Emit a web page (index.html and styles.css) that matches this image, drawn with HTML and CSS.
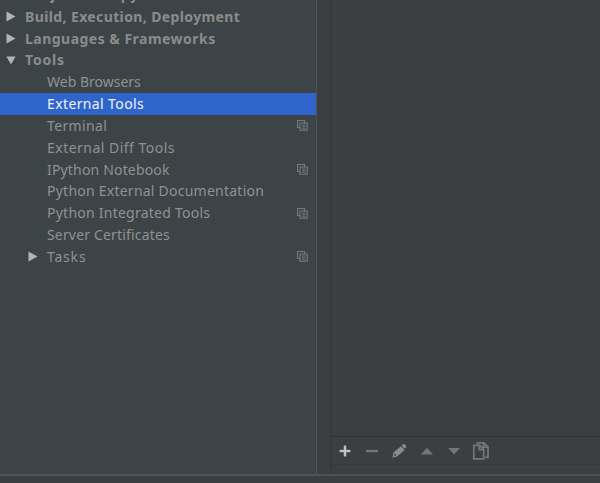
FILE: index.html
```html
<!DOCTYPE html>
<html lang="en">
<head>
<meta charset="utf-8">
<title>Preferences</title>
<link rel="stylesheet" href="styles.css">
</head>
<body>
<svg class="defs" width="0" height="0">
  <symbol id="copy" viewBox="0 0 11 11"><path d="M2.5 7.5h-2v-7h7v2M3 3h7.2v7.2H3z" fill="none" stroke="currentColor" stroke-width="1.1"/><path d="M5 5h3.5M5 6.7h3.5M5 8.4h3.5" stroke="currentColor" stroke-width=".9"/></symbol>
  <symbol id="right" viewBox="0 0 10 11"><path d="M.5.5 9.5 5.5.5 10.5z" fill="currentColor"/></symbol>
  <symbol id="down" viewBox="0 0 11 9"><path d="M.4.2h10.2L5.5 9z" fill="currentColor"/></symbol>
</svg>
<div class="window">
  <main class="content">
    <nav class="tree">
      <div class="row group"><span class="label widest">Project: scrapy</span></div>
      <div class="row group"><svg class="arrow"><use href="#right"/></svg><span class="label">Build, Execution, Deployment</span></div>
      <div class="row group"><svg class="arrow"><use href="#right"/></svg><span class="label wide">Languages &amp; Frameworks</span></div>
      <div class="row group"><svg class="arrow open"><use href="#down"/></svg><span class="label widest">Tools</span></div>
      <div class="row"><span class="label tight">Web Browsers</span></div>
      <div class="row selected"><span class="label">External Tools</span></div>
      <div class="row"><span class="label">Terminal</span><svg class="copy"><use href="#copy"/></svg></div>
      <div class="row"><span class="label wide">External Diff Tools</span></div>
      <div class="row"><span class="label snug">IPython Notebook</span><svg class="copy"><use href="#copy"/></svg></div>
      <div class="row"><span class="label medium">Python External Documentation</span></div>
      <div class="row"><span class="label medium">Python Integrated Tools</span><svg class="copy"><use href="#copy"/></svg></div>
      <div class="row"><span class="label snug">Server Certificates</span></div>
      <div class="row branch"><svg class="arrow"><use href="#right"/></svg><span class="label widest">Tasks</span><svg class="copy"><use href="#copy"/></svg></div>
    </nav>
    <section class="panel">
      <div class="list"></div>
      <div class="toolbar">
        <svg class="tool bright" viewBox="0 0 20 20"><path d="M10 4v12M4 10h12" stroke="#303234" stroke-width="4"/><path d="M10 4.5v11M4.5 10h11" stroke="currentColor" stroke-width="2.6"/></svg>
        <svg class="tool" viewBox="0 0 20 20"><path d="M4 10h12" stroke="currentColor" stroke-width="2.4"/></svg>
        <svg class="tool pencil" viewBox="0 0 20 20"><path d="m2.5 16.8.8-5 7.5-6.6 3.8 3.8-7.5 6.6z" fill="currentColor"/><path d="m11.6 4.6 1.5-1.4c1.5-.6 3.5 1.3 2.9 3l-1.4 1.5z" fill="currentColor"/><path d="m4.2 12.7 1.3.4.5 1.6-1.5.4z" fill="#3c3f41"/></svg>
        <svg class="tool" viewBox="0 0 20 20"><path d="M4 13.5h12L10 6.8z" fill="currentColor"/></svg>
        <svg class="tool" viewBox="0 0 20 20"><path d="M4 7h12l-6 6.5z" fill="currentColor"/></svg>
        <svg class="tool" viewBox="0 0 20 20"><path d="M6.5 3.5V1.8h6.3l4.2 4v10.5h-3M12.5 2v4.2H17M2.8 4.3h5.9l4 4v9.6H2.8zM8.3 4.5v4.2h4.2" fill="none" stroke="currentColor" stroke-width="1.8"/></svg>
      </div>
    </section>
  </main>
  <footer class="footer"></footer>
</div>
</body>
</html>
```
FILE: styles.css
```css
* { box-sizing: border-box; }
body { margin: 0; background: #3c3f41; overflow: hidden; }
.defs { position: absolute; }
.window { width: 600px; height: 483px; display: flex; flex-direction: column; }
.content { height: 474px; display: flex; }
.tree {
  width: 317px; flex: none; overflow: hidden;
  background: #3d4447; border-right: 1px solid #505355;
  color: #8f9292;
  font: 14px/21.8px "Noto Sans", sans-serif;
  letter-spacing: .38px;
}
.row { height: 21.82px; display: flex; align-items: center; padding: 0 8px 0 47px; white-space: nowrap; }
.row:first-child { margin-top: -16px; }
.group { padding-left: 6px; font-weight: 700; color: #898c8d; }
.group .label { margin-left: 9px; }
.group .label:first-child { margin-left: 19px; }
.branch { padding-left: 28px; }
.branch .label { margin-left: 9px; }
.selected { background: #2f65ca; color: #f0f3fa; }
.tight { letter-spacing: 0; }
.snug { letter-spacing: .17px; }
.medium { letter-spacing: .24px; }
.wide { letter-spacing: .48px; }
.widest { letter-spacing: .8px; }
.arrow { width: 10px; height: 11px; flex: none; color: #b1b3b4; }
.arrow.open { height: 9px; }
.copy { width: 11px; height: 11px; margin-left: auto; color: #777b7d; }
.panel { flex: 1; margin-left: 13px; display: flex; flex-direction: column; border-left: 1px solid #343739; }
.list { height: 437px; border-bottom: 1px solid #303335; }
.toolbar { height: 28px; display: flex; align-items: center; gap: 7.3px; padding-left: 4px; border-bottom: 1px solid #36393b; color: #737678; }
.tool { width: 20px; height: 20px; flex: none; }
.bright { color: #bfc1c2; }
.pencil { color: #898b8c; }
.footer { flex: 1; border-top: 2px solid #505355; background: #3c3f41; }
```
